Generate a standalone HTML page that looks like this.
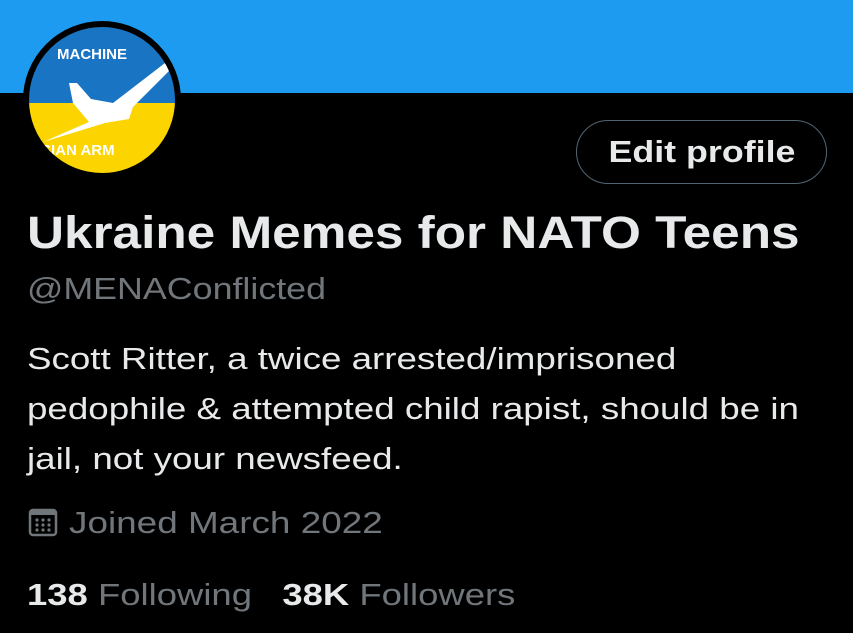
<!DOCTYPE html>
<html><head><style>
body{margin:0;width:853px;height:633px;background:#000;overflow:hidden;font-family:"Liberation Sans",sans-serif;position:relative}
.banner{position:absolute;left:0;top:0;width:853px;height:93px;background:#1d9bf0}
.av{position:absolute;left:23px;top:21px;width:146px;height:146px;border:6px solid #000;border-radius:50%;overflow:hidden;background:linear-gradient(#1a74c4 0 52%,#fcd500 52%)}
.btn{position:absolute;left:576px;top:120px;width:249px;height:62px;border:1px solid #536471;border-radius:32px;color:#e7e9ea;font-weight:bold;font-size:31px;display:flex;align-items:center;justify-content:center}
.btn span{display:inline-block;transform:scaleX(1.155)}
.t{position:absolute;left:27px;white-space:nowrap;transform-origin:0 0}
.name{top:207px;font-size:45px;font-weight:bold;color:#e7e9ea;transform:scaleX(1.14)}
.handle{top:271px;font-size:31px;color:#71767b;transform:scaleX(1.155)}
.bio{top:334px;font-size:31px;line-height:50px;color:#e7e9ea;transform:scaleX(1.185)}
.join{top:505px;font-size:31px;color:#71767b;left:27px}
.join span{display:inline-block;transform:scaleX(1.19);transform-origin:0 0}
.stats{top:577px;font-size:31px;color:#71767b;transform:scaleX(1.176)}
.stats b{color:#e7e9ea}
</style></head><body>
<div class="banner"></div>
<div class="av">
<svg width="146" height="146" viewBox="0 0 146 146">
<text x="28" y="32" fill="#fff" font-size="15" font-weight="bold" font-family="Liberation Sans">MACHINE</text>
<text x="2" y="128" fill="#fff" font-size="15" font-weight="bold" font-family="Liberation Sans">SSIAN ARM</text>
<path d="M14 115 L60 95 L44 76 L40 56 L48 56 L62 72 L84 76 L136 36 L142 42 L104 80 L100 92 L76 96 Z" fill="#fff"/>
</svg>
</div>
<div class="btn"><span>Edit profile</span></div>
<div class="t name">Ukraine Memes for NATO Teens</div>
<div class="t handle">@MENAConflicted</div>
<div class="t bio">Scott Ritter, a twice arrested/imprisoned<br>pedophile &amp; attempted child rapist, should be in<br>jail, not your newsfeed.</div>
<div class="t join"><svg width="32" height="32" viewBox="0 0 32 32" style="vertical-align:-5px;margin-right:10px"><rect x="3" y="4" width="26" height="25" rx="3" fill="none" stroke="#71767b" stroke-width="2.5"/><rect x="3" y="4" width="26" height="5" fill="#71767b"/><g fill="#71767b"><circle cx="10" cy="14" r="1.6"/><circle cx="16" cy="14" r="1.6"/><circle cx="22" cy="14" r="1.6"/><circle cx="10" cy="19" r="1.6"/><circle cx="16" cy="19" r="1.6"/><circle cx="22" cy="19" r="1.6"/><circle cx="10" cy="24" r="1.6"/><circle cx="16" cy="24" r="1.6"/><circle cx="22" cy="24" r="1.6"/></g></svg><span>Joined March 2022</span></div>
<div class="t stats"><b>138</b> Following &nbsp;&nbsp;<b>38K</b> Followers</div>
</body></html>
